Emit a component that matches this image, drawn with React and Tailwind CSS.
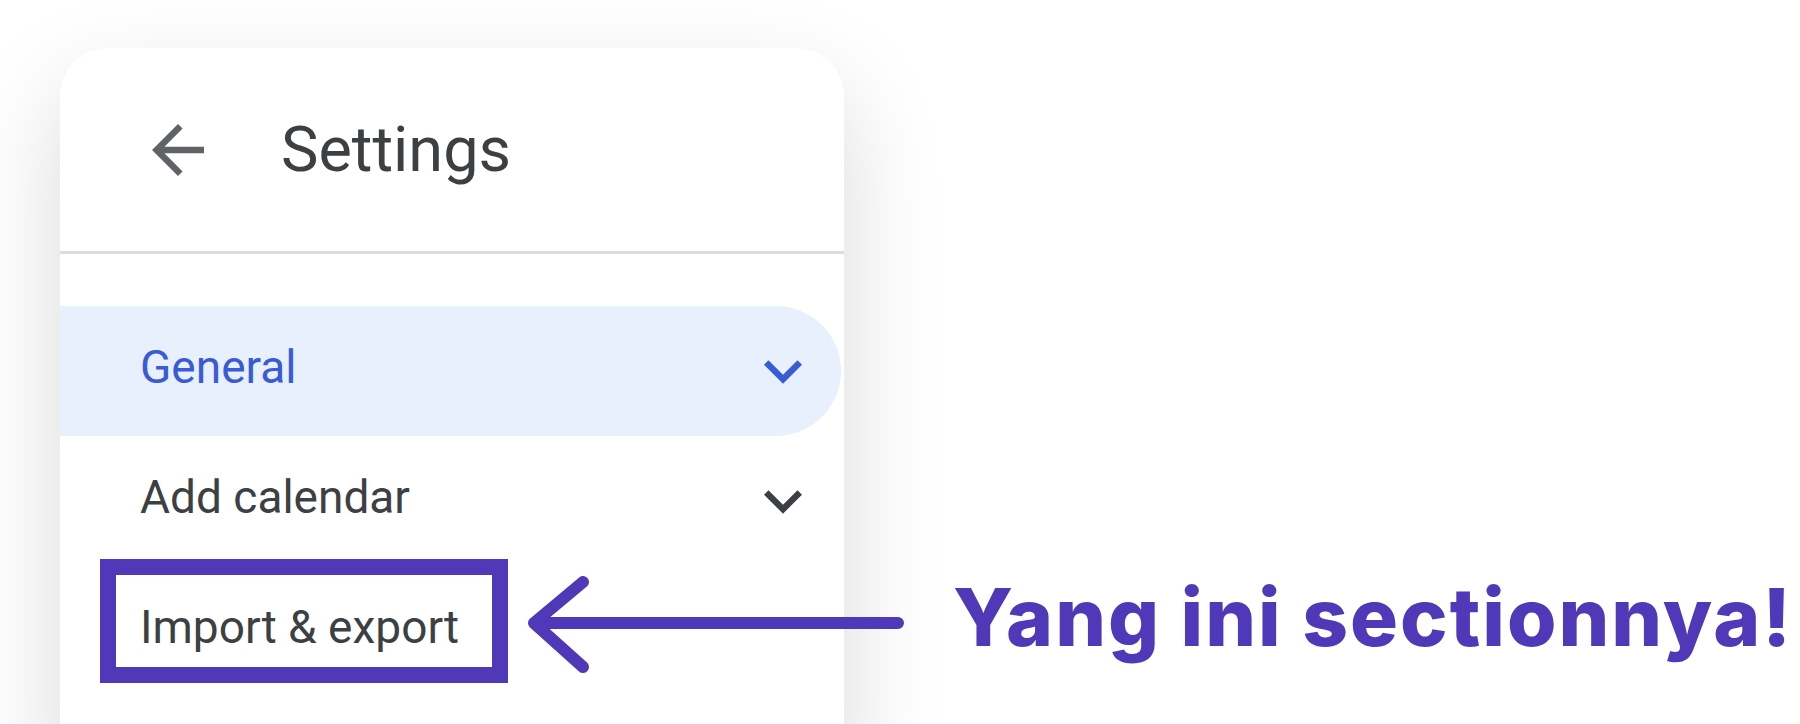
import React from 'react';

const ArrowBack = ({ className }) => (
  <svg viewBox="0 0 24 24" className={className} fill="currentColor">
    <path d="M20 11H7.83l5.59-5.59L12 4l-8 8 8 8 1.41-1.41L7.83 13H20v-2z" />
  </svg>
);

const ExpandMore = ({ className }) => (
  <svg viewBox="0 0 24 24" className={className} fill="currentColor">
    <path d="M16.59 8.59L12 13.17 7.41 8.59 6 10l6 6 6-6z" />
  </svg>
);

function NavRow({ label, active, children }) {
  return (
    <div
      className={
        'relative flex h-[130px] w-[781px] items-center justify-between pl-[80px] pr-[20px] ' +
        (active ? 'rounded-r-full bg-[#e8f0fe] text-[#3a5bd6]' : 'text-[#3c4043]')
      }
    >
      <span className="pb-[8px] text-[46px] leading-none">{label}</span>
      {children}
    </div>
  );
}

export default function App() {
  return (
    <div className="relative h-[724px] w-[1800px] overflow-hidden bg-white font-['Roboto',sans-serif]">
      {/* Settings panel */}
      <div className="ml-[60px] mt-[48px] h-[720px] w-[784px] rounded-t-[48px] bg-white shadow-[0_40px_100px_rgba(0,0,0,0.15)]">
        <div className="flex h-[206px] items-center border-b-[3px] border-[#dadce0] pl-[79px]">
          <ArrowBack className="h-[78px] w-[78px] text-[#5f6368]" />
          <span className="ml-[64px] text-[63px] leading-none text-[#3c4043]">Settings</span>
        </div>

        <div className="pt-[52px]">
          <NavRow label="General" active>
            <ExpandMore className="h-[76px] w-[76px] text-[#3a5bd6]" />
          </NavRow>
          <NavRow label="Add calendar">
            <ExpandMore className="h-[76px] w-[76px] text-[#3c4043]" />
          </NavRow>
          <NavRow label="Import & export">
            {/* highlight box */}
            <div className="absolute left-[40px] top-[-7px] h-[124px] w-[408px] border-[16px] border-[#4f39b8]" />
          </NavRow>
        </div>
      </div>

      {/* Callout */}
      <div className="absolute left-[520px] top-[570px] flex items-center">
        <svg width="390" height="110" viewBox="0 0 390 110" className="text-[#4f39b8]">
          <path
            d="M63 12 L14 53 L63 97 M14 53 L378 53"
            fill="none"
            stroke="currentColor"
            strokeWidth="12"
            strokeLinecap="round"
            strokeLinejoin="round"
          />
        </svg>
        <span className="ml-[43px] mt-[-16px] whitespace-nowrap font-['Inter',sans-serif] text-[80px] font-extrabold leading-none tracking-[2px] text-[#4f39b8]">
          Yang ini sectionnya!
        </span>
      </div>
    </div>
  );
}
